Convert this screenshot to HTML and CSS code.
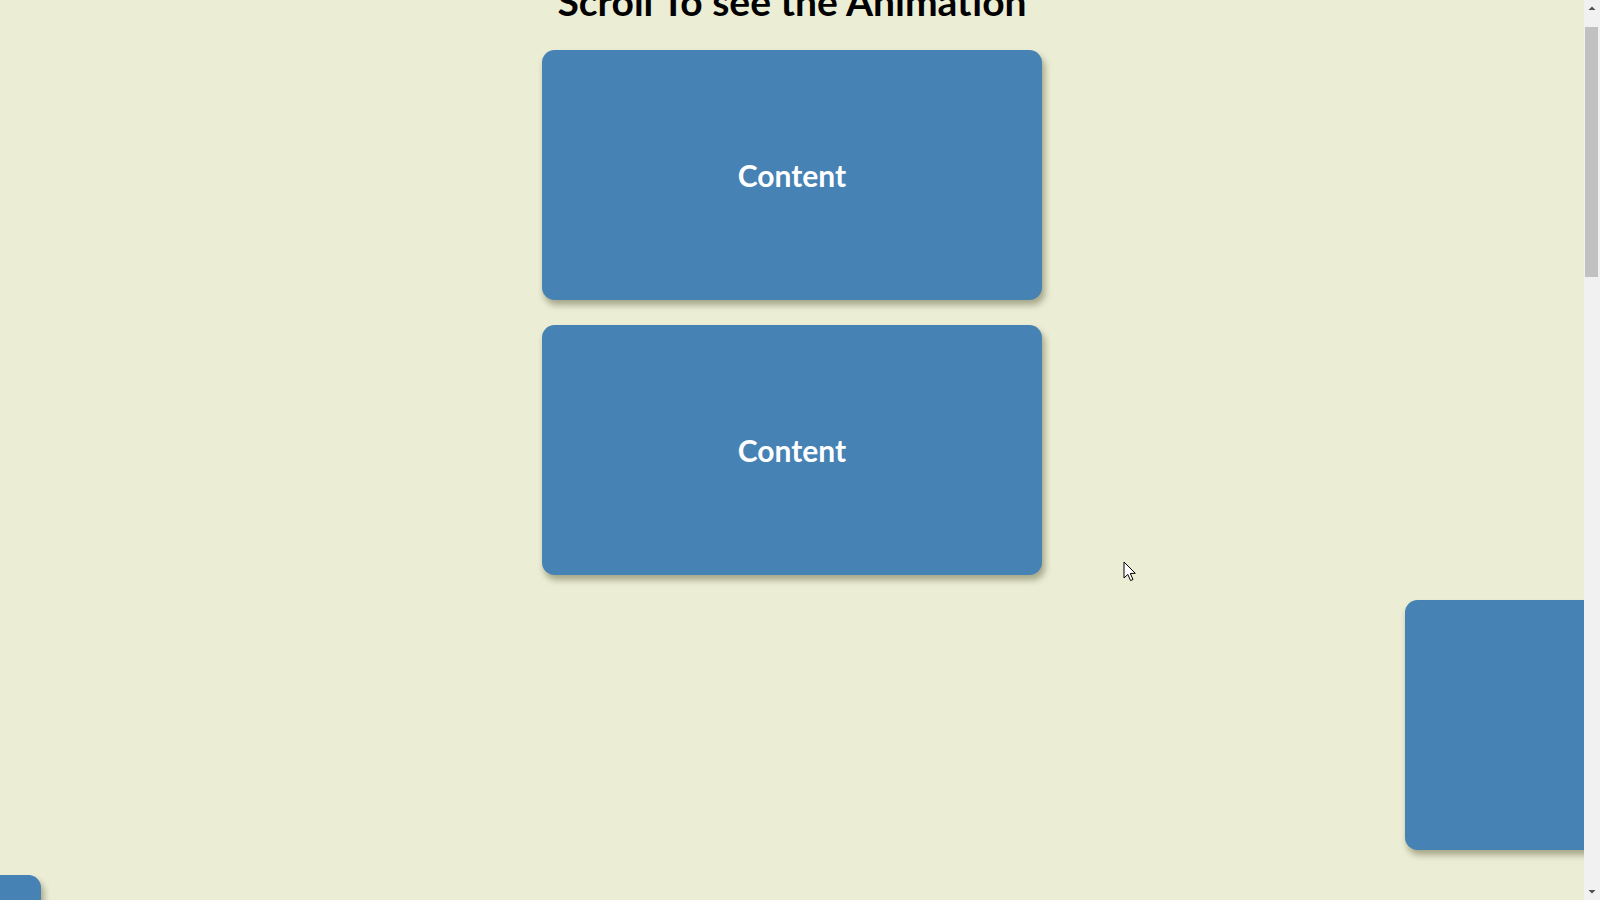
FILE: index.html
```html
<!DOCTYPE html>
<html lang="en">
<head>
<meta charset="utf-8">
<title>Scroll Animation</title>
<link rel="stylesheet" href="styles.css">
</head>
<body>
  <h1 class="title">Scroll To see the Animation</h1>
  <div class="box show"><h2>Content</h2></div>
  <div class="box show"><h2>Content</h2></div>
  <div class="box slide-r"><h2>Content</h2></div>
  <div class="box slide-l"><h2>Content</h2></div>
  <div class="box"><h2>Content</h2></div>
  <div class="box"><h2>Content</h2></div>
  <div class="box"><h2>Content</h2></div>
  <div class="box"><h2>Content</h2></div>
  <div class="box"><h2>Content</h2></div>
  <div class="box"><h2>Content</h2></div>
  <div class="box"><h2>Content</h2></div>
  <svg class="cursor" width="14" height="22" viewBox="0 0 14 22">
    <path d="M1 1 L1 17 L4.8 13.4 L7.6 19.6 L10 18.5 L7.3 12.5 L12.3 12.3 Z" fill="#fff" stroke="#000" stroke-width="1" stroke-linejoin="round"/>
  </svg>
  <div class="scrollbar">
    <svg class="arrow up" width="16" height="17" viewBox="0 0 16 17"><path d="M4.5 10 L8 6.5 L11.5 10 Z" fill="#505050"/></svg>
    <div class="thumb"></div>
    <svg class="arrow down" width="16" height="17" viewBox="0 0 16 17"><path d="M4.5 7 L8 10.5 L11.5 7 Z" fill="#505050"/></svg>
  </div>
  <script src="script.js"></script>
</body>
</html>
```
FILE: styles.css
```css
html, body {
  margin: 0;
}
body {
  background-color: #ebedd4;
  font-family: Lato, "Noto Sans", sans-serif;
  display: flex;
  flex-direction: column;
  align-items: center;
  overflow-x: hidden;
  position: relative;
  padding-right: 16px;
}
.title {
  margin: 12.5px;
  font-size: 39px;
  font-weight: 700;
  line-height: 48px;
  color: #000;
}
.box {
  background-color: #4682b4;
  color: #fff;
  display: flex;
  align-items: center;
  justify-content: center;
  width: 500px;
  height: 250px;
  margin: 12.5px;
  border-radius: 12.5px;
  box-shadow: 2.5px 5px 6px rgba(40, 40, 0, 0.35);
  transform: translateX(2000px);
  flex-shrink: 0;
}
.box:nth-of-type(even) {
  transform: translateX(-2000px);
}
.box h2 {
  font-size: 30px;
  font-weight: 700;
  margin: 0;
}
.box.show {
  transform: translateX(0);
}
.box.slide-r {
  transform: translateX(863px);
}
.box.slide-l {
  transform: translateX(-1001px);
}
.cursor {
  position: absolute;
  left: 1123px;
  top: 597px;
}
.scrollbar {
  position: fixed;
  top: 0;
  right: 0;
  width: 16px;
  height: 100vh;
  background: #f1f1f1;
  display: flex;
  flex-direction: column;
  z-index: 10;
}
.arrow {
  display: block;
  flex-shrink: 0;
}
.thumb {
  margin: 10px 2px 0 1px;
  height: 250px;
  background: #c1c1c1;
  flex-shrink: 0;
}
.arrow.down {
  margin-top: auto;
}
```
FILE: script.js
```js
window.scrollTo(0, 36);
window.addEventListener('load', function () { window.scrollTo(0, 36); });
```
